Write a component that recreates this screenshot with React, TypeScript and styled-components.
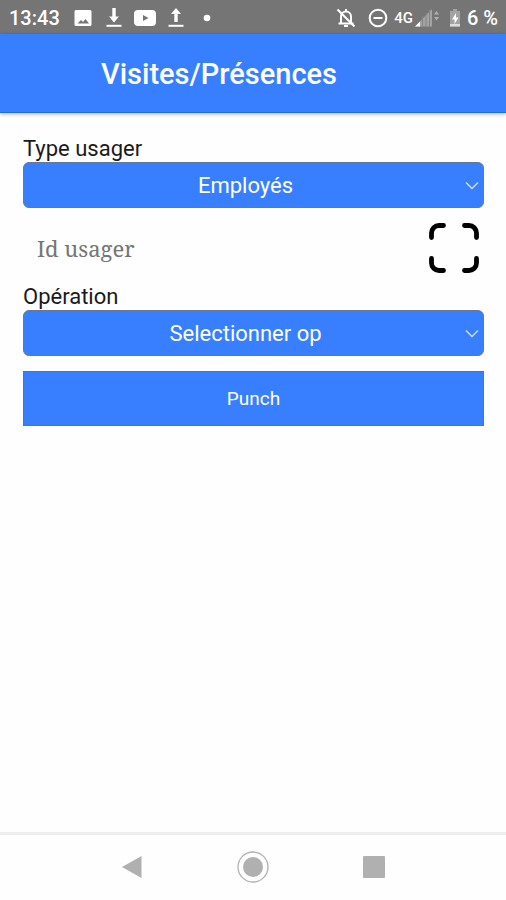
import React, { useState } from "react";
import styled, { createGlobalStyle } from "styled-components";

const blue = "#387fff";

const GlobalStyle = createGlobalStyle`
  * { box-sizing: border-box; }
  body { margin: 0; background: #fefefe; font-family: Roboto, sans-serif; color: #1a1a1a; }
  button, select, input { font: inherit; margin: 0; }
`;

const Screen = styled.div`
  min-height: 100vh;
  display: flex;
  flex-direction: column;
`;

const StatusBar = styled.div`
  display: flex;
  align-items: center;
  justify-content: space-between;
  height: 34px;
  padding: 2px 8px 0 9px;
  background: #757575;
  color: #fff;
`;

const StatusGroup = styled.div<{ $gap: number }>`
  display: flex;
  align-items: center;
  gap: ${(p) => p.$gap}px;
`;

const Slot = styled.span`
  display: flex;
  justify-content: center;
  width: 31px;
`;

const StatusText = styled.span<{ $size?: number }>`
  font-size: ${(p) => p.$size ?? 20}px;
  line-height: 24px;
  font-weight: 500;
  white-space: nowrap;
`;

const Clock = styled(StatusText)`
  margin-right: 8px;
`;

const Battery = styled.div`
  display: flex;
  align-items: center;
  gap: 6px;
  margin-left: 4px;
`;

const Header = styled.header`
  height: 79px;
  display: flex;
  align-items: center;
  justify-content: center;
  padding: 2px 68px 0 0;
  background: ${blue};
  border-bottom: 1px solid #1c6fe0;
  box-shadow: 0 1px 4px rgba(0, 0, 0, 0.3);
`;

const Title = styled.h1`
  margin: 0;
  font-size: 29px;
  line-height: 34px;
  font-weight: 500;
  color: #fff;
`;

const Form = styled.form`
  flex: 1;
  display: flex;
  flex-direction: column;
  padding: 23px 22px 24px 23px;
`;

const Label = styled.label`
  font-size: 22px;
  line-height: 26px;
`;

const SelectBox = styled.div`
  position: relative;
  display: flex;
`;

const Select = styled.select`
  appearance: none;
  flex: 1;
  min-width: 0;
  height: 46px;
  padding: 0 20px 0 4px;
  border: 1px solid #6b7690;
  border-radius: 6px;
  background: ${blue};
  color: #fff;
  font-size: 22px;
  text-align: center;
  text-align-last: center;
`;

const Chevron = styled.svg`
  position: absolute;
  right: 5px;
  top: 19px;
  pointer-events: none;
`;

const IdRow = styled.div`
  display: flex;
  align-items: center;
  height: 76px;
  padding: 4px 5px 0 14px;
`;

const IdInput = styled.input`
  flex: 1;
  min-width: 0;
  height: 46px;
  padding: 0;
  border: 0;
  background: transparent;
  font-family: "Noto Serif", "DejaVu Serif", serif;
  font-size: 22px;
  color: #333;
  &::placeholder { color: #757575; opacity: 1; }
`;

const ScanButton = styled.button`
  display: flex;
  padding: 0;
  border: 0;
  background: none;
  color: #000;
`;

const PunchButton = styled.button`
  height: 55px;
  margin-top: 15px;
  border: 1px solid #2a7bf8;
  background: ${blue};
  color: #fff;
  font-size: 19px;
`;

const NavBar = styled.nav`
  display: flex;
  justify-content: center;
  height: 68px;
  padding-bottom: 2px;
  border-top: 3px solid #eee;
`;

const NavButton = styled.button`
  width: 24%;
  display: flex;
  align-items: center;
  justify-content: center;
  padding: 0;
  border: 0;
  background: none;
  color: #b0b0b0;
`;

const ImageIcon = () => (
  <svg width="18" height="18" viewBox="0 0 18 18">
    <path fill="#fff" fillRule="evenodd" d="M2 1h14a1.500 1.500 0 0 1 1.500 1.500v13a1.500 1.500 0 0 1-1.500 1.500H2a1.500 1.500 0 0 1-1.500-1.500v-13A1.500 1.500 0 0 1 2 1ZM3.500 14.500h11.500l-3.500-4.500-2.500 3-2-2Z" />
  </svg>
);

const TransferIcon = ({ up }: { up?: boolean }) => (
  <svg width="16" height="20" viewBox="0 0 16 20" fill="#fff">
    {up ? <path d="M8 0l5 6H9.700v8H6.300V6H3Z" /> : <path d="M6.300 0h3.400v8.500H13l-5 6-5-6h3.300Z" />}
    <path d="M0.500 16.800h15v2H0.500Z" />
  </svg>
);

const VideoIcon = () => (
  <svg width="22" height="18" viewBox="0 0 22 18">
    <rect y="1" width="22" height="16" rx="4" fill="#fff" />
    <path d="M9 6l5.500 3L9 12Z" fill="#757575" />
  </svg>
);

const DotIcon = () => (
  <svg width="8" height="8" viewBox="0 0 8 8">
    <circle cx="4" cy="4" r="3.300" fill="#fff" />
  </svg>
);

const MutedBellIcon = () => (
  <svg width="20" height="20" viewBox="0 0 20 20" fill="none" stroke="#fff" strokeWidth="2">
    <path d="M5 15V8.500a5 5 0 0 1 10 0V15M2.500 15.500h15M10 1v3" />
    <path d="M8 18h4M1.500 1.500l17 17" />
  </svg>
);

const DoNotDisturbIcon = () => (
  <svg width="20" height="20" viewBox="0 0 20 20" fill="none" stroke="#fff" strokeWidth="2">
    <circle cx="10" cy="10" r="8.300" />
    <path d="M5.500 10h9" />
  </svg>
);

const SignalIcon = () => (
  <svg width="24" height="18" viewBox="0 0 24 18">
    <path d="M0 17.500L17 0v17.500Z" fill="#a3a3a3" />
    <path d="M0 17.500l5-5v5Z" fill="#fff" />
    <path d="M7.500 7v11M11 4v14M14.500 1v17" stroke="#858585" />
    <path d="M19 5.500l2.500-3.500L24 5.500ZM19 8l2.500 3.500L24 8Z" fill="#b0b0b0" />
  </svg>
);

const BatteryIcon = () => (
  <svg width="12" height="18" viewBox="0 0 12 18">
    <path d="M4 0h4v2h3v15.500H1V2h3Z" fill="#a3a3a3" />
    <path d="M1 15h10v2.500H1Z" fill="#ddd" />
    <path d="M7 4L3 10.500h2.500V15l4-6.500H7Z" fill="#fff" />
  </svg>
);

const ScanIcon = () => (
  <svg width="50" height="50" viewBox="0 0 50 50" fill="none" stroke="currentColor" strokeWidth="4.800" strokeLinecap="round">
    <path d="M2.500 14.500V10a7.500 7.500 0 0 1 7.500-7.500h4.500M35.500 2.500H40a7.500 7.500 0 0 1 7.500 7.500v4.500M47.500 35.500V40a7.500 7.500 0 0 1-7.500 7.500h-4.500M14.500 47.500H10A7.500 7.500 0 0 1 2.500 40v-4.500" />
  </svg>
);

type DropdownProps = { id: string; options: string[] };

const Dropdown = ({ id, options }: DropdownProps) => {
  const [value, setValue] = useState(options[0]);
  return (
    <SelectBox>
      <Select id={id} value={value} onChange={(e) => setValue(e.target.value)}>
        {options.map((o) => (
          <option key={o}>{o}</option>
        ))}
      </Select>
      <Chevron width="14" height="9" viewBox="0 0 14 9" fill="none" stroke="#d5e4ff" strokeWidth="1.300">
        <path d="M1 1.500l6 6 6-6" />
      </Chevron>
    </SelectBox>
  );
};

export default function App() {
  return (
    <Screen>
      <GlobalStyle />
      <StatusBar>
        <StatusGroup $gap={0}>
          <Clock>13:43</Clock>
          <Slot><ImageIcon /></Slot>
          <Slot><TransferIcon /></Slot>
          <Slot><VideoIcon /></Slot>
          <Slot><TransferIcon up /></Slot>
          <Slot><DotIcon /></Slot>
        </StatusGroup>
        <StatusGroup $gap={6}>
          <StatusGroup $gap={12}>
            <MutedBellIcon />
            <DoNotDisturbIcon />
          </StatusGroup>
          <StatusGroup $gap={2}>
            <StatusText $size={15}>4G</StatusText>
            <SignalIcon />
          </StatusGroup>
          <Battery>
            <BatteryIcon />
            <StatusText>6 %</StatusText>
          </Battery>
        </StatusGroup>
      </StatusBar>
      <Header>
        <Title>Visites/Présences</Title>
      </Header>
      <Form onSubmit={(e) => e.preventDefault()}>
        <Label htmlFor="type">Type usager</Label>
        <Dropdown id="type" options={["Employés"]} />
        <IdRow>
          <IdInput aria-label="Id usager" placeholder="Id usager" />
          <ScanButton type="button" aria-label="Scanner">
            <ScanIcon />
          </ScanButton>
        </IdRow>
        <Label htmlFor="operation">Opération</Label>
        <Dropdown id="operation" options={["Selectionner op"]} />
        <PunchButton type="submit">Punch</PunchButton>
      </Form>
      <NavBar>
        <NavButton type="button" aria-label="Retour">
          <svg width="22" height="24" viewBox="0 0 22 24">
            <path d="M1 12L20.500 1v22Z" fill="currentColor" />
          </svg>
        </NavButton>
        <NavButton type="button" aria-label="Accueil">
          <svg width="32" height="32" viewBox="0 0 32 32">
            <circle cx="16" cy="16" r="15" fill="none" stroke="currentColor" strokeWidth="1.300" />
            <circle cx="16" cy="16" r="10" fill="currentColor" />
          </svg>
        </NavButton>
        <NavButton type="button" aria-label="Applications">
          <svg width="22" height="22" viewBox="0 0 22 22">
            <rect width="22" height="22" rx="1" fill="currentColor" />
          </svg>
        </NavButton>
      </NavBar>
    </Screen>
  );
}
